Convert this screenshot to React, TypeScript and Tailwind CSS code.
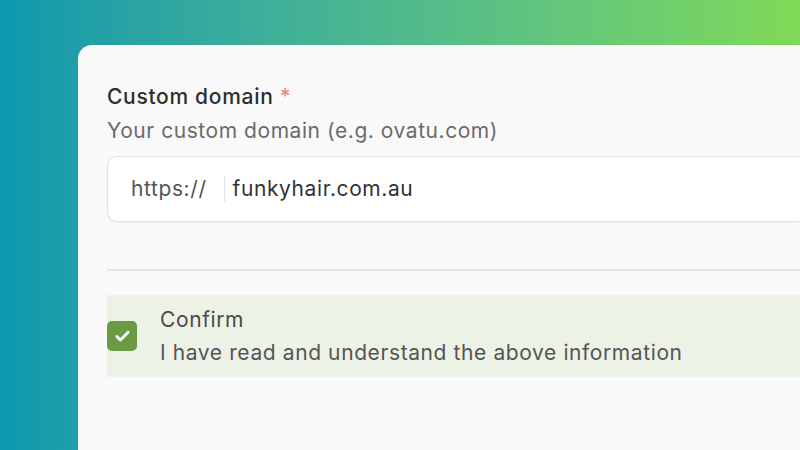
import { Check } from 'lucide-react';

export default function App() {
  return (
    <div
      className="w-[800px] h-[450px] overflow-hidden bg-gradient-to-r from-[#0a98ae] to-[#80d955] pt-[45px] pl-[78px]"
      style={{ fontFamily: 'Inter, "Noto Sans", sans-serif' }}
    >
      <div className="h-[420px] bg-[#f9f9f9] rounded-tl-[14px] pl-[29px] pt-[37px]">
        <div className="text-[21px] leading-[30px] font-medium text-[#2e2e2e] tracking-[0.7px]">
          Custom domain <span className="text-[#ee8a86]">*</span>
        </div>
        <div className="mt-[4px] text-[21px] leading-[30px] text-[#6b6b6b] tracking-[0.55px]">
          Your custom domain (e.g. ovatu.com)
        </div>

        <div className="mt-[10px] h-[66px] bg-white border border-[#e2e2e2] border-r-0 rounded-l-[10px] flex items-center shadow-[0_1px_2px_rgba(0,0,0,0.04)]">
          <span className="pl-[23px] text-[21px] text-[#555] tracking-[0.6px]">https://</span>
          <span className="ml-[17px] w-px h-[26px] bg-[#e6e6e6]" />
          <span className="ml-[8px] text-[21px] text-[#333] tracking-[0.6px]">funkyhair.com.au</span>
        </div>

        <div className="mt-[47px] h-[2px] bg-[#e6e6e6]" />

        <div className="mt-[24px] h-[82px] bg-[#edf2e6] flex items-center">
          <div className="w-[30px] h-[30px] rounded-[5px] bg-[#6a9a45] flex items-center justify-center">
            <Check className="w-[17px] h-[17px] text-white" strokeWidth={4} />
          </div>
          <div className="ml-[23px] flex flex-col">
            <span className="text-[21px] leading-[33px] text-[#4a4a4a] tracking-[0.6px]">Confirm</span>
            <span className="text-[21px] leading-[33px] text-[#555] tracking-[0.6px]">
              I have read and understand the above information
            </span>
          </div>
        </div>
      </div>
    </div>
  );
}
